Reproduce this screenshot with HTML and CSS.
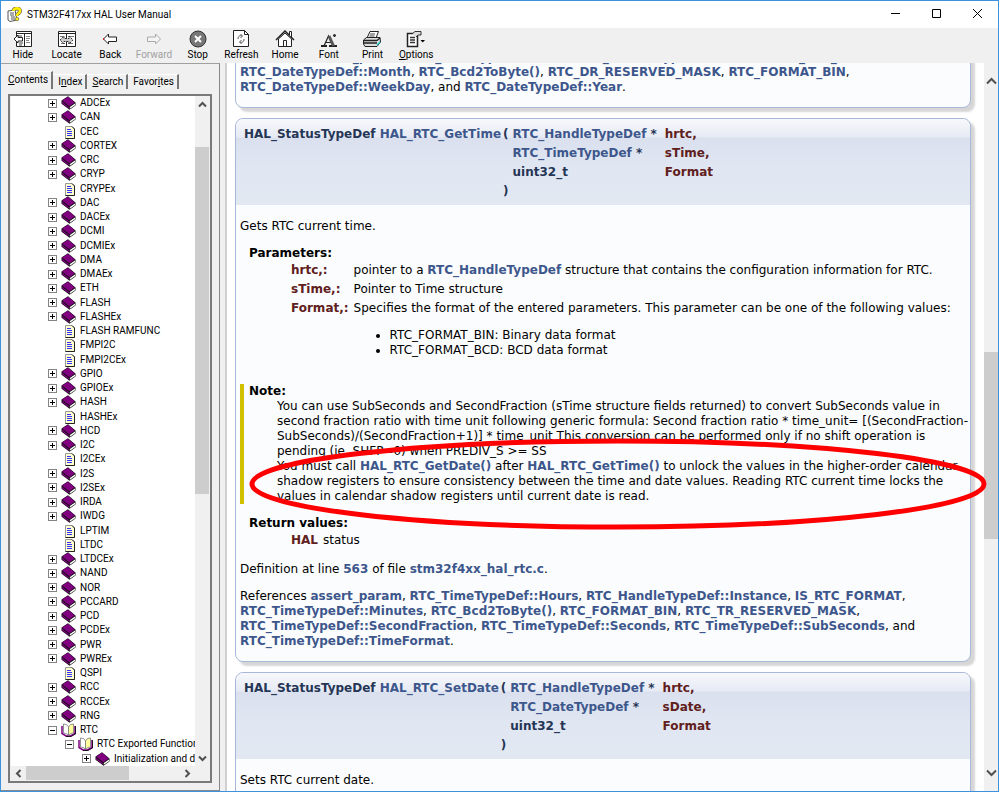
FILE: index.html
```
<!DOCTYPE html>
<html lang="en">
<head>
  <meta charset="UTF-8">
  <meta name="viewport" content="width=device-width, initial-scale=1">
  <title>STM32F417xx HAL User Manual</title>
  <link rel="stylesheet" href="styles.css">
</head>
<body>

<!-- Tree icons -->
<svg class="sprites" width="0" height="0">
  <symbol id="book" viewBox="0 0 15 14">
    <path d="M.5 4.500 L7 .3 L14.500 6.500 V9.500 L8.500 13.700 L.5 7.700Z" fill="#111"/>
    <path d="M1 4.500 L7 .8 L13.800 6.500 L8.300 10.300Z" fill="#800080"/>
    <path d="M1 5.800 L8 11.200 V12.600 L1 7.500Z" fill="#800080"/>
    <path d="M8.800 11 L14 7.600 V9.200 L8.800 12.700Z" fill="#fff"/>
  </symbol>
  <symbol id="open" viewBox="0 0 15 14">
    <path d="M1 3 V10.500 L5 13 H9.500 L14 10.500 V3" fill="#fff" stroke="#800080" stroke-width="1.500"/>
    <path d="M14.500 3 V11 L10 13.500 H5" fill="none" stroke="#000" stroke-width=".8"/>
    <path d="M2.500 1 L5.500 1.500 L7.500 4 V12 L5 10.500 L2.500 10Z" fill="#fff" stroke="#777" stroke-width=".8"/>
    <path d="M7.500 4 L9.500 1.500 L12.500 1 V10 L10 10.500 L7.500 12Z" fill="#ffff9c" stroke="#777" stroke-width=".8"/>
  </symbol>
  <symbol id="page" viewBox="0 0 15 14">
    <path d="M4.500 1.500 H11 L13.500 4 V13.500 H4.500Z" fill="#ffffd0" stroke="#999"/>
    <path d="M11 1.500 L13.500 4 V13.500 H4.500" fill="none" stroke="#222"/>
    <path d="M6 4.500 H10 M6 6.500 H11 M6 8.500 H11 M6 10.500 H11" stroke="#33f"/>
  </symbol>
</svg>

<div class="window">
  <header class="titlebar">
    <svg class="logo" width="15" height="15" viewBox="0 0 15 15">
      <path d="M1 4 L8 3 L10 13 L3 14.500 L1 13Z" fill="#fff" stroke="#555"/>
      <path d="M3 6 H7 M3 8 H7 M4 10 H8 M4 12 H8" stroke="#555"/>
      <path d="M6.500 4 C6.500 .5 13 .5 13 4 C13 6.500 10 6 10 9" fill="none" stroke="#665" stroke-width="4"/>
      <path d="M6.500 4 C6.500 .5 13 .5 13 4 C13 6.500 10 6 10 9" fill="none" stroke="#fe0" stroke-width="2.600"/>
      <circle cx="10" cy="12" r="1.800" fill="#fe0" stroke="#665" stroke-width=".7"/>
    </svg>
    <h1>STM32F417xx HAL User Manual</h1>
    <button class="caption" aria-label="Minimize"><svg width="11" height="11"><path d="M1 5.500 H10" stroke="#000"/></svg></button>
    <button class="caption" aria-label="Maximize"><svg width="11" height="11"><path d="M1.500 1.500 H9.500 V9.500 H1.500Z" fill="none" stroke="#000"/></svg></button>
    <button class="caption" aria-label="Close"><svg width="11" height="11"><path d="M1 1 L10 10 M10 1 L1 10" stroke="#000"/></svg></button>
  </header>

  <nav class="toolbar">
    <button>
      <svg width="20" height="18" viewBox="0 0 20 18"><path d="M3.500 1.500 H18.500 V16.500 H3.500Z" fill="#fff" stroke="#222"/><path d="M3 3.500 H19 M11.500 3 V17" stroke="#222"/><path d="M13 6.500 H17 M13 8.500 H17 M13 10.500 H16 M13 12.500 H17" stroke="#888"/><path d="M5 6 H9 M6 13 H10 M6 15 H9" stroke="#444"/><path d="M1 9 L5 5 V7.500 H9.500 V11 H5 V13Z" fill="#fff" stroke="#222"/></svg>
      Hide
    </button>
    <button>
      <svg width="20" height="18" viewBox="0 0 20 18"><path d="M1.500 1.500 H18.500 V16.500 H1.500Z" fill="#fff" stroke="#222"/><path d="M1 3.500 H19 M9.500 3 V17" stroke="#222"/><path d="M11 6.500 H17 M11 13.500 H16 M3 6.500 H6 M4 13.500 H8" stroke="#777"/><path d="M3 10 L7 6 V8.500 H12 V6 L16 10 L12 14 V11.500 H7 V14Z" fill="#ccc" stroke="#333" stroke-dasharray="2 1"/></svg>
      Locate
    </button>
    <button>
      <svg width="20" height="18" viewBox="0 0 20 18"><path d="M3.500 9 L8.500 4 V7 H16.500 V11.500 H8.500 V14Z" fill="#fff" stroke="#222"/><path d="M3.500 8 V10" stroke="#c22"/></svg>
      Back
    </button>
    <button disabled>
      <svg width="20" height="18" viewBox="0 0 20 18"><path d="M16.500 9 L11.500 4 V7 H3.500 V11.500 H11.500 V14Z" fill="#f4f4f4" stroke="#aaa"/></svg>
      Forward
    </button>
    <button>
      <svg width="20" height="18" viewBox="0 0 20 18"><circle cx="10" cy="9" r="8" fill="#777" stroke="#333"/><path d="M7 6 L13 12 M13 6 L7 12" stroke="#fff" stroke-width="2"/></svg>
      Stop
    </button>
    <button>
      <svg width="20" height="18" viewBox="0 0 20 18"><path d="M2.500 .5 H13.500 L17.500 4.500 V16.500 H2.500Z" fill="#fff" stroke="#222"/><path d="M13.500 .5 V4.500 H17.500" fill="none" stroke="#222"/><path d="M7 9 C7 6 9 5 11 6 M9.500 4 L11.500 6 L9.500 8 M13 9 C13 12 11 13 9 12 M10.500 10 L8.500 12 L10.500 14" fill="none" stroke="#555"/></svg>
      Refresh
    </button>
    <button>
      <svg width="20" height="18" viewBox="0 0 20 18"><path d="M3.500 9 V16.500 H16.500 V9 L10 3Z" fill="#fff" stroke="#222"/><path d="M1 10 L10 1 L19 10" fill="none" stroke="#222" stroke-width="1.500"/><path d="M14.500 5 V1.500 H16.500 V7" fill="#fff" stroke="#222"/><path d="M8.500 16 V10.500 H11.500 V16" fill="none" stroke="#222"/></svg>
      Home
    </button>
    <button>
      <svg width="20" height="18" viewBox="0 0 20 18"><path d="M2 16 H8 M10 16 H18" stroke="#222" stroke-width="2"/><path d="M5 16 L9.500 6 L14 16 M7 12.500 H12" fill="none" stroke="#222" stroke-width="1.200"/><path d="M10 6 L14.500 16" stroke="#555" stroke-width="3"/><path d="M14 5.500 H17 M15.500 4 V7" stroke="#333" stroke-width="1.500"/></svg>
      Font
    </button>
    <button>
      <svg width="20" height="18" viewBox="0 0 20 18"><path d="M5 8 L8 1.500 H16.500 L14 8Z" fill="#fff" stroke="#222"/><path d="M8 4 H13 M7.500 6 H12.500" stroke="#444"/><path d="M1.500 10 L4.500 7.500 H18 L18.500 12 L15 16.500 H3 L1.500 14Z" fill="#ddd" stroke="#222"/><path d="M2 10.500 H15 M2 13 H15 M15 10.500 L18 8" stroke="#222" stroke-width="1.300"/><path d="M15 15 L18 12" stroke="#2cc" stroke-width="1.500"/></svg>
      Print
    </button>
    <button>
      <svg width="20" height="18" viewBox="0 0 20 18"><path d="M1.500 3.500 H11.500 V16.500 H1.500Z" fill="#fff" stroke="#222" stroke-width="1.500"/><path d="M6 4 L9 1.500 H15 V5 H12 L10 7" fill="#ddd" stroke="#333"/><path d="M4 7.500 H9 M4 10 H9 M4 12.500 H9" stroke="#333" stroke-width="1.500"/><path d="M14.500 10 H19 L16.750 12.500Z" fill="#000"/></svg>
      <span><u>O</u>ptions</span>
    </button>
  </nav>

  <main class="workspace">
    <aside class="sidebar">
      <div class="tabs">
        <button class="active"><u>C</u>ontents</button>
        <button>I<u>n</u>dex</button>
        <button><u>S</u>earch</button>
        <button>Favor<u>i</u>tes</button>
      </div>
      <div class="panel">
        <ul class="tree" id="tree"></ul>
        <div class="scroll-y tree-scroll">
          <svg width="9" height="7"><path d="M1 5.500 L4.500 2 L8 5.500"/></svg>
          <div class="track"><div class="thumb"></div></div>
          <svg width="9" height="7"><path d="M1 1.500 L4.500 5 L8 1.500"/></svg>
        </div>
        <div class="scroll-x">
          <svg width="7" height="9"><path d="M5.500 1 L2 4.500 L5.500 8"/></svg>
          <div class="track"><div class="thumb"></div></div>
          <svg width="7" height="9"><path d="M1.500 1 L5 4.500 L1.500 8"/></svg>
        </div>
      </div>
    </aside>

    <article class="doc">
      <section class="memitem clipped">
        <div class="memdoc">
          <p>References <a href="#">assert_param</a>, <a href="#">RTC_DateTypeDef::Date</a>, <a href="#">RTC_HandleTypeDef::Instance</a>, <a href="#">IS_RTC_FORMAT</a>,<br>
          <a href="#">RTC_DateTypeDef::Month</a>, <a href="#">RTC_Bcd2ToByte()</a>, <a href="#">RTC_DR_RESERVED_MASK</a>, <a href="#">RTC_FORMAT_BIN</a>,<br>
          <a href="#">RTC_DateTypeDef::WeekDay</a>, and <a href="#">RTC_DateTypeDef::Year</a>.</p>
        </div>
      </section>

      <section class="memitem">
        <div class="memproto">
          <table>
            <tr><td>HAL_StatusTypeDef <a href="#">HAL_RTC_GetTime</a></td><td>(</td><td><a href="#">RTC_HandleTypeDef</a> *</td><td class="param">hrtc,</td></tr>
            <tr><td></td><td></td><td><a href="#">RTC_TimeTypeDef</a> *</td><td class="param">sTime,</td></tr>
            <tr><td></td><td></td><td>uint32_t</td><td class="param">Format</td></tr>
            <tr><td></td><td>)</td><td></td><td></td></tr>
          </table>
        </div>
        <div class="memdoc">
          <p>Gets RTC current time.</p>
          <dl>
            <dt>Parameters:</dt>
            <dd>
              <table class="params">
                <tr><td class="param">hrtc,:</td><td>pointer to a <a href="#">RTC_HandleTypeDef</a> structure that contains the configuration information for RTC.</td></tr>
                <tr><td class="param">sTime,:</td><td>Pointer to Time structure</td></tr>
                <tr><td class="param">Format,:</td><td>Specifies the format of the entered parameters. This parameter can be one of the following values:
                  <ul>
                    <li>RTC_FORMAT_BIN: Binary data format</li>
                    <li>RTC_FORMAT_BCD: BCD data format</li>
                  </ul></td></tr>
              </table>
            </dd>
          </dl>
          <dl class="note">
            <dt>Note:</dt>
            <dd>You can use SubSeconds and SecondFraction (sTime structure fields returned) to convert SubSeconds value in<br>
            second fraction ratio with time unit following generic formula: Second fraction ratio * time_unit= [(SecondFraction-<br>
            SubSeconds)/(SecondFraction+1)] * time_unit This conversion can be performed only if no shift operation is<br>
            pending (ie. SHFP=0) when PREDIV_S &gt;= SS</dd>
            <dd>You must call <a href="#">HAL_RTC_GetDate()</a> after <a href="#">HAL_RTC_GetTime()</a> to unlock the values in the higher-order calendar<br>
            shadow registers to ensure consistency between the time and date values. Reading RTC current time locks the<br>
            values in calendar shadow registers until current date is read.</dd>
          </dl>
          <dl>
            <dt>Return values:</dt>
            <dd>
              <table class="params">
                <tr><td class="param">HAL</td><td>status</td></tr>
              </table>
            </dd>
          </dl>
          <p>Definition at line <a href="#">563</a> of file <a href="#">stm32f4xx_hal_rtc.c</a>.</p>
          <p>References <a href="#">assert_param</a>, <a href="#">RTC_TimeTypeDef::Hours</a>, <a href="#">RTC_HandleTypeDef::Instance</a>, <a href="#">IS_RTC_FORMAT</a>,<br>
          <a href="#">RTC_TimeTypeDef::Minutes</a>, <a href="#">RTC_Bcd2ToByte()</a>, <a href="#">RTC_FORMAT_BIN</a>, <a href="#">RTC_TR_RESERVED_MASK</a>,<br>
          <a href="#">RTC_TimeTypeDef::SecondFraction</a>, <a href="#">RTC_TimeTypeDef::Seconds</a>, <a href="#">RTC_TimeTypeDef::SubSeconds</a>, and<br>
          <a href="#">RTC_TimeTypeDef::TimeFormat</a>.</p>
        </div>
      </section>

      <section class="memitem">
        <div class="memproto">
          <table>
            <tr><td>HAL_StatusTypeDef <a href="#">HAL_RTC_SetDate</a></td><td>(</td><td><a href="#">RTC_HandleTypeDef</a> *</td><td class="param">hrtc,</td></tr>
            <tr><td></td><td></td><td><a href="#">RTC_DateTypeDef</a> *</td><td class="param">sDate,</td></tr>
            <tr><td></td><td></td><td>uint32_t</td><td class="param">Format</td></tr>
            <tr><td></td><td>)</td><td></td><td></td></tr>
          </table>
        </div>
        <div class="memdoc">
          <p>Sets RTC current date.</p>
        </div>
      </section>
    </article>

    <div class="scroll-y doc-scroll">
      <svg width="11" height="8"><path d="M1 6.500 L5.500 2 L10 6.500"/></svg>
      <div class="track"><div class="thumb"></div></div>
      <svg width="11" height="8"><path d="M1 1.500 L5.500 6 L10 1.500"/></svg>
    </div>

    <svg class="marker" width="740" height="92" viewBox="0 0 740 92">
      <ellipse cx="369" cy="46" rx="366" ry="43" fill="none" stroke="#f00" stroke-width="5"/>
    </svg>
  </main>
</div>

<script>
  // "+" closed book, "-" open book, no sign is a page; ">" is one level deeper
  const items = [
    '+ADCEx', '+CAN', 'CEC', '+CORTEX', '+CRC', '+CRYP', 'CRYPEx', '+DAC', '+DACEx',
    '+DCMI', '+DCMIEx', '+DMA', '+DMAEx', '+ETH', '+FLASH', '+FLASHEx', 'FLASH RAMFUNC',
    'FMPI2C', 'FMPI2CEx', '+GPIO', '+GPIOEx', '+HASH', 'HASHEx', '+HCD', '+I2C', 'I2CEx',
    '+I2S', '+I2SEx', '+IRDA', '+IWDG', 'LPTIM', 'LTDC', '+LTDCEx', '+NAND', '+NOR',
    '+PCCARD', '+PCD', '+PCDEx', '+PWR', '+PWREx', 'QSPI', '+RCC', '+RCCEx', '+RNG',
    '-RTC', '>-RTC Exported Functions', '>>+Initialization and de-initialization functions'
  ];

  document.getElementById('tree').innerHTML = items.map(item => {
    const [, depth, sign, name] = item.match(/^(>*)([+-]?)(.*)$/);
    const icon = sign === '+' ? 'book' : sign === '-' ? 'open' : 'page';
    const toggle = sign
      ? `<button class="toggle ${icon}" aria-label="Toggle ${name}"></button>`
      : '<span class="toggle-space"></span>';
    return `<li class="level-${depth.length}">${toggle}<svg width="15" height="14"><use href="#${icon}"/></svg><a href="#">${name}</a></li>`;
  }).join('');
</script>

</body>
</html>
```
FILE: styles.css
```
* {
  box-sizing: border-box;
}

body {
  margin: 0;
  font-family: Roboto, "Liberation Sans", sans-serif;
  font-size: 10px;
  color: #000;
}

button {
  padding: 0;
  border: none;
  background: none;
  font: inherit;
  color: inherit;
}

ul,
dl,
dd,
p {
  margin: 0;
  padding: 0;
}

.sprites {
  position: absolute;
}

.window {
  height: 100vh;
  display: flex;
  flex-direction: column;
  border: 1px solid #3c92dc;
  background: #f0f0f0;
  overflow: hidden;
}

.titlebar {
  display: flex;
  align-items: center;
  height: 27px;
  padding-left: 6px;
  background: #fff;
}

.titlebar h1 {
  flex: 1;
  margin: 0 0 0 5px;
  font-size: 10px;
  font-weight: normal;
}

.caption {
  width: 41px;
  height: 27px;
}

.toolbar {
  display: flex;
  width: 437px;
  height: 35px;
}

.toolbar button {
  flex: 1 0 0;
  display: flex;
  flex-direction: column;
  align-items: center;
  padding-top: 2px;
  line-height: 14px;
}

.toolbar button:disabled {
  color: #a0a0a0;
}

.workspace {
  flex: 1;
  display: flex;
  min-height: 0;
  position: relative;
}

/* Sidebar */
.sidebar {
  width: 219px;
  display: flex;
  flex-direction: column;
  padding: 7px 7px 7px;
  border-top: 1px solid #a0a0a0;
  border-right: 1px solid #888;
  border-bottom: 1px solid #888;
}

.tabs {
  display: flex;
  align-items: flex-end;
  height: 18px;
  margin-bottom: 5px;
}

.tabs button {
  height: 15px;
  padding: 0 3px 0 5px;
  border-right: 2px solid #777;
  border-top: 1px solid #fff;
  line-height: 14px;
}

.tabs .active {
  height: 18px;
  padding: 0 3px 2px 0;
}

.panel {
  flex: 1;
  min-height: 0;
  display: grid;
  grid-template-columns: minmax(0, 1fr) 14px;
  grid-template-rows: minmax(0, 1fr) 14px;
  padding: 0 1px 1px;
  border: 2px solid #7a7a7a;
}

.tree {
  display: flex;
  flex-direction: column;
  background: #fff;
  list-style: none;
  overflow: hidden;
}

.tree li {
  flex: 1 0 0;
  min-height: 0;
  display: flex;
  align-items: center;
  gap: 4px;
  padding-left: 37px;
  white-space: nowrap;
}

.tree .level-1 {
  padding-left: 54px;
}

.tree .level-2 {
  padding-left: 71px;
}

.tree svg {
  flex: none;
}

.tree a {
  color: #000;
  text-decoration: none;
  line-height: 14px;
}

.toggle,
.toggle-space {
  flex: none;
  width: 9px;
  height: 9px;
}

.toggle {
  border: 1px solid #848484;
  background: linear-gradient(#000, #000) center / 5px 1px no-repeat, #fff;
}

.toggle.book {
  background: linear-gradient(#000, #000) center / 5px 1px no-repeat,
    linear-gradient(#000, #000) center / 1px 5px no-repeat, #fff;
}

/* Scrollbars */
.scroll-y,
.scroll-x {
  display: flex;
  align-items: center;
  background: #f0f0f0;
}

.scroll-y {
  flex-direction: column;
}

.scroll-y path,
.scroll-x path {
  fill: none;
  stroke: #505050;
  stroke-width: 2;
}

.track {
  flex: 1;
  display: flex;
}

.scroll-y .track {
  width: 100%;
  flex-direction: column;
}

.scroll-x .track {
  height: 100%;
}

.thumb {
  background: #cdcdcd;
}

.tree-scroll {
  padding: 5px 0 4px;
}

.tree-scroll .track {
  padding-top: 39px;
}

.tree-scroll .thumb {
  height: 57%;
}

.scroll-x {
  padding: 0 4px;
}

.scroll-x .track {
  padding: 0 4px;
}

.scroll-x .thumb {
  width: 67%;
}

.doc-scroll {
  width: 14px;
  padding: 14px 0;
}

.doc-scroll .track {
  padding-top: 267px;
}

.doc-scroll .thumb {
  height: 187px;
}

/* Documentation pane */
.doc {
  flex: 1;
  min-width: 0;
  margin-left: 5px;
  padding: 0 13px 0 8px;
  border-left: 2px solid #d0d0d0;
  background: #fff;
  font-family: "DejaVu Sans", Verdana, sans-serif;
  font-size: 12px;
  line-height: 15px;
  overflow: hidden;
  white-space: nowrap;
}

.doc a {
  color: #3d578c;
  font-weight: bold;
  text-decoration: none;
}

.memitem {
  margin-bottom: 10px;
  border: 1px solid #a8b8d9;
  border-radius: 8px;
  background: #fbfcfd;
  box-shadow: 4px 4px 2px rgba(0, 0, 0, 0.16);
}

.memitem.clipped {
  margin-top: -28px;
}

.memproto {
  padding: 6px 6px 4px;
  border-radius: 8px 8px 0 0;
  background: linear-gradient(#f6f8fb 0, #e6eaf4 18px, #dae0ee 19px, #e0e7f2 50px, #e2e8f2);
  color: #253555;
  font-weight: bold;
}

table {
  border-collapse: collapse;
}

td {
  height: 19px;
  padding: 0;
  vertical-align: top;
}

.memproto td {
  padding: 2px 1px;
}

.memproto td:first-child {
  padding-left: 2px;
}

.memproto td:nth-child(3) {
  padding: 2px 7px 2px 3px;
}

.param {
  color: #602020;
  font-weight: bold;
}

.memdoc {
  padding: 2px 4px 0;
}

.memdoc p {
  margin: 12px 0;
}

dl {
  padding-left: 9px;
}

dt {
  font-weight: bold;
}

.params {
  margin-left: 42px;
}

.params td {
  padding: 2px 0;
}

.params td:first-child {
  padding-right: 5px;
}

.params ul {
  margin: 12px 0;
  padding-left: 36px;
}

.note {
  margin: 12px 0;
  padding-left: 5px;
  border-left: 4px solid #d0c000;
}

.note dd {
  margin-left: 28px;
}

/* Hand-drawn ring around the second note */
.marker {
  position: absolute;
  top: 375px;
  right: 9px;
}
```
